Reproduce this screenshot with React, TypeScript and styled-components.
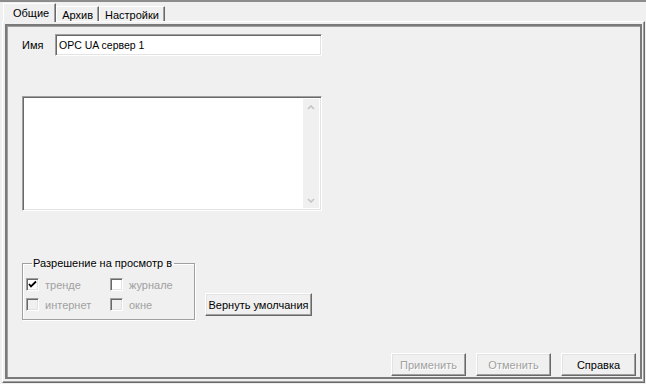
import React from 'react';
import styled, { createGlobalStyle } from 'styled-components';

const GlobalStyle = createGlobalStyle`
  html, body {
    margin: 0;
    padding: 0;
    background: #f0f0f0;
  }
  body {
    font-family: "Liberation Sans", Arial, sans-serif;
    font-size: 11px;
    color: #000;
  }
`;

const Window = styled.div`
  width: 646px;
  height: 384px;
  box-sizing: border-box;
  border-top: 2px solid #8c8c8c;
  padding: 0 1px 1px 2px;
  display: flex;
  flex-direction: column;
  background: #f0f0f0;
  overflow: hidden;
`;

const TabStrip = styled.div`
  height: 19px;
  display: flex;
  align-items: flex-end;
  padding-left: 1px;
  position: relative;
  z-index: 1;
`;

const Tab = styled.div<{ $active?: boolean }>`
  box-sizing: border-box;
  height: ${(p) => (p.$active ? '19px' : '15px')};
  margin-bottom: ${(p) => (p.$active ? '-1px' : '0')};
  padding: ${(p) => (p.$active ? '3px 6px 0 9px' : '2px 5px 0 5px')};
  background: #f0f0f0;
  border-top: 1px solid #fff;
  border-left: 1px solid #fff;
  border-right: 1px solid #696969;
  box-shadow: inset -1px 0 0 #a0a0a0;
  line-height: 12px;
  white-space: nowrap;
`;

const Panel = styled.div`
  flex: 1;
  box-sizing: border-box;
  border-top: 1px solid #fff;
  border-left: 1px solid #fff;
  border-right: 1px solid #696969;
  border-bottom: 1px solid #696969;
  box-shadow: inset -1px -1px 0 #a0a0a0;
  padding: 2px 2px 3px 2px;
  display: flex;
`;

const Frame = styled.div`
  flex: 1;
  box-sizing: border-box;
  border: 2px solid #7a7a7a;
  box-shadow: inset 1px 1px 0 #a0a0a0;
  padding: 9px 4px 0 15px;
  display: flex;
  flex-direction: column;
`;

const NameRow = styled.div`
  display: flex;
  align-items: center;
  height: 22px;
  margin-top: -1px;
`;

const Label = styled.span`
  width: 33px;
  flex-shrink: 0;
`;

const Sunken = styled.div`
  box-sizing: border-box;
  background: #fff;
  border-top: 1px solid #a0a0a0;
  border-left: 1px solid #a0a0a0;
  border-right: 1px solid #fff;
  border-bottom: 1px solid #fff;
  box-shadow: inset 1px 1px 0 #696969, inset -1px -1px 0 #e3e3e3;
`;

const TextInput = styled(Sunken)`
  width: 267px;
  height: 22px;
  padding: 2px 4px 0 3px;
  line-height: 16px;
  font-size: 10.5px;
`;

const Memo = styled(Sunken)`
  width: 300px;
  height: 115px;
  margin-top: 40px;
  display: flex;
  justify-content: flex-end;
  padding: 2px;
`;

const ScrollBar = styled.div`
  width: 16px;
  background: #f0f0f0;
  display: flex;
  flex-direction: column;
  justify-content: space-between;
  align-items: center;
  padding: 6px 0 5px;
`;

const BottomArea = styled.div`
  display: flex;
  align-items: flex-end;
  gap: 10px;
  margin-top: 46px;
`;

const Group = styled.fieldset`
  box-sizing: border-box;
  width: 173px;
  height: 63px;
  margin: 0;
  padding: 8px 0 0 3px;
  border: 1px solid #a0a0a0;
  box-shadow: 1px 1px 0 #fff, inset 1px 1px 0 #fff;
  display: grid;
  grid-template-columns: 84px 80px;
  row-gap: 7px;
  align-content: start;
`;

const Legend = styled.legend`
  padding: 0 2px 0 1px;
  margin-left: 6px;
  line-height: 13px;
`;

const CheckItem = styled.div`
  display: flex;
  align-items: center;
  gap: 6px;
  color: #a0a0a0;
  height: 13px;
`;

const Box = styled.span<{ $filled?: boolean }>`
  box-sizing: border-box;
  width: 13px;
  height: 13px;
  flex-shrink: 0;
  background: ${(p) => (p.$filled ? '#fff' : '#f0f0f0')};
  border-top: 1px solid #a0a0a0;
  border-left: 1px solid #a0a0a0;
  border-right: 1px solid #fff;
  border-bottom: 1px solid #fff;
  box-shadow: inset 1px 1px 0 #696969, inset -1px -1px 0 #e3e3e3;
  display: flex;
  align-items: center;
  justify-content: center;
`;

const Button = styled.div<{ $disabled?: boolean; $width: number }>`
  box-sizing: border-box;
  width: ${(p) => p.$width}px;
  height: 23px;
  display: flex;
  align-items: center;
  justify-content: center;
  background: #f0f0f0;
  border-top: 1px solid #fff;
  border-left: 1px solid #fff;
  border-right: 1px solid #696969;
  border-bottom: 1px solid #696969;
  box-shadow: inset -1px -1px 0 #a0a0a0, inset 1px 1px 0 #e3e3e3;
  color: ${(p) => (p.$disabled ? '#a0a0a0' : '#000')};
  text-shadow: ${(p) => (p.$disabled ? '1px 1px 0 #fff' : 'none')};
  white-space: nowrap;
`;

const DefaultsButton = styled(Button)`
  margin-bottom: 4px;
`;

const Footer = styled.div`
  margin-top: auto;
  display: flex;
  justify-content: flex-end;
  gap: 10px;
  padding-bottom: 1px;
`;

const Chevron = ({ down }: { down?: boolean }) => (
  <svg width="8" height="5" viewBox="0 0 8 5">
    <polyline
      points={down ? '1,1 4,4 7,1' : '1,4 4,1 7,4'}
      fill="none"
      stroke="#c4c4c4"
      strokeWidth="1.6"
    />
  </svg>
);

const Check = () => (
  <svg width="9" height="9" viewBox="0 0 9 9">
    <polyline points="1,4 3,6.5 8,1.5" fill="none" stroke="#000" strokeWidth="1.8" />
  </svg>
);

const options = [
  { label: 'тренде', checked: true, filled: true },
  { label: 'журнале', checked: false, filled: true },
  { label: 'интернет', checked: false, filled: false },
  { label: 'окне', checked: false, filled: false },
];

export default function App() {
  return (
    <>
      <GlobalStyle />
      <Window>
        <TabStrip>
          <Tab $active>Общие</Tab>
          <Tab>Архив</Tab>
          <Tab>Настройки</Tab>
        </TabStrip>
        <Panel>
          <Frame>
            <NameRow>
              <Label>Имя</Label>
              <TextInput>OPC UA сервер 1</TextInput>
            </NameRow>
            <Memo>
              <ScrollBar>
                <Chevron />
                <Chevron down />
              </ScrollBar>
            </Memo>
            <BottomArea>
              <Group>
                <Legend>Разрешение на просмотр в</Legend>
                {options.map((o) => (
                  <CheckItem key={o.label}>
                    <Box $filled={o.filled}>{o.checked && <Check />}</Box>
                    {o.label}
                  </CheckItem>
                ))}
              </Group>
              <DefaultsButton $width={107}>Вернуть умолчания</DefaultsButton>
            </BottomArea>
            <Footer>
              <Button $disabled $width={75}>Применить</Button>
              <Button $disabled $width={75}>Отменить</Button>
              <Button $width={75}>Справка</Button>
            </Footer>
          </Frame>
        </Panel>
      </Window>
    </>
  );
}
